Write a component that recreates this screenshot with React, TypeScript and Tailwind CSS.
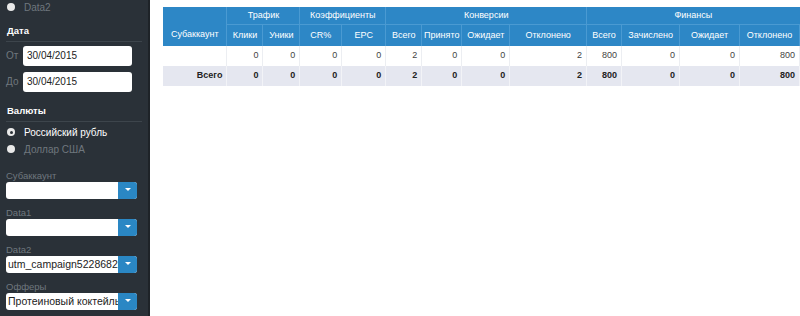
import React from 'react'

const Select: React.FC<{ value?: string }> = ({ value }) => (
  <div className="flex h-[17px] w-[131px] overflow-hidden rounded-[3px] bg-white">
    <div className="flex-1 overflow-hidden whitespace-nowrap pl-[2px] text-[10.5px] leading-[17px] text-[#222]">{value}</div>
    <div className="flex w-[19px] items-center justify-center bg-[#2a87c4]">
      <svg width="6" height="4" viewBox="0 0 6 4"><path d="M0 0h6L3 3z" fill="#fff" /></svg>
    </div>
  </div>
)

const Radio: React.FC<{ label: string; checked?: boolean }> = ({ label, checked }) => (
  <div className="flex h-[17px] items-center gap-[9px] pl-[7px]">
    <span className="flex h-[8px] w-[8px] items-center justify-center rounded-full bg-[#e9e9e9]">
      {checked && <span className="h-[3px] w-[3px] rounded-full bg-[#2a3138]" />}
    </span>
    <span className={checked ? 'text-[10px] text-white' : 'text-[10px] text-[#6f777e]'}>{label}</span>
  </div>
)

const Section: React.FC<{ title: string }> = ({ title }) => (
  <div className="mx-[6px] border-b border-[#3d454c] pb-[3px] pl-[1px] text-[9.5px] font-bold leading-[14px] text-white">{title}</div>
)

const DateInput: React.FC<{ label: string }> = ({ label }) => (
  <div className="flex h-[20px] items-center pl-[6px]">
    <span className="w-[17px] text-[10px] text-[#6f777e]">{label}</span>
    <div className="h-[20px] w-[109px] rounded-[3px] bg-white pl-[4px] text-[10px] leading-[20px] text-[#222]">30/04/2015</div>
  </div>
)

const Field: React.FC<{ label: string; value?: string }> = ({ label, value }) => (
  <div className="flex flex-col">
    <span className="text-[9.5px] leading-[12px] text-[#6f777e]">{label}</span>
    <Select value={value} />
  </div>
)

const Sidebar: React.FC = () => (
  <aside className="h-[316px] w-[150px] shrink-0 border-r-2 border-[#1e2328] bg-[#2a3138]">
    <div className="-mt-[1.5px]"><Radio label="Data2" /></div>
    <div className="mt-[8px]"><Section title="Дата" /></div>
    <div className="mt-[4px]"><DateInput label="От" /></div>
    <div className="mt-[6px]"><DateInput label="До" /></div>
    <div className="mt-[12px]"><Section title="Валюты" /></div>
    <div className="mt-[2px]">
      <Radio label="Российский рубль" checked />
      <Radio label="Доллар США" />
    </div>
    <div className="mt-[12px] flex flex-col gap-[8px] px-[6px]">
      <Field label="Субаккаунт" />
      <Field label="Data1" />
      <Field label="Data2" value="utm_campaign5228682u" />
      <Field label="Офферы" value="Протеиновый коктейль" />
    </div>
  </aside>
)

const cols = [64, 36, 37, 42, 44, 36, 40, 48, 77, 35, 58, 60, 60]
const sub = ['Клики', 'Уники', 'CR%', 'EPC', 'Всего', 'Принято', 'Ожидает', 'Отклонено', 'Всего', 'Зачислено', 'Ожидает', 'Отклонено']
const row = ['0', '0', '0', '0', '2', '0', '0', '2', '800', '0', '0', '800']

const App: React.FC = () => {
  return (
    <div className="flex h-[316px] w-[800px] overflow-hidden bg-white font-['Liberation_Sans',Arial,sans-serif]">
      <Sidebar />
      <main className="flex-1 pl-[13px] pt-[7px]">
        <table className="table-fixed border-collapse text-[9px]">
          <colgroup>
            {cols.map((w, i) => (
              <col key={i} style={{ width: w }} />
            ))}
          </colgroup>
          <thead className="bg-[#2d87c6] text-white">
            <tr className="h-[17px]">
              <th className="border-r border-[#4a9ad2] font-normal"></th>
              <th colSpan={2} className="border-r border-[#4a9ad2] font-normal">Трафик</th>
              <th colSpan={2} className="border-r border-[#4a9ad2] font-normal">Коэффициенты</th>
              <th colSpan={4} className="border-r border-[#4a9ad2] font-normal">Конверсии</th>
              <th colSpan={4} className="font-normal">Финансы</th>
            </tr>
            <tr className="h-[22px]">
              <th className="border-r border-[#4a9ad2] font-normal">Субаккаунт</th>
              {sub.map((s, i) => (
                <th key={i} className="border-r border-t border-[#4a9ad2] font-normal">{s}</th>
              ))}
            </tr>
          </thead>
          <tbody className="text-[#444]">
            <tr className="h-[20px] bg-white">
              <td className="border-r border-[#eceef2]"></td>
              {row.map((v, i) => (
                <td key={i} className="border-r border-[#eceef2] pr-[4px] text-right">{v}</td>
              ))}
            </tr>
            <tr className="h-[20px] bg-[#e5e7f0] font-bold text-[#222]">
              <td className="border-r border-[#f2f3f7] pr-[4px] text-right">Всего</td>
              {row.map((v, i) => (
                <td key={i} className="border-r border-[#f2f3f7] pr-[4px] text-right">{v}</td>
              ))}
            </tr>
          </tbody>
        </table>
      </main>
    </div>
  )
}

export default App
